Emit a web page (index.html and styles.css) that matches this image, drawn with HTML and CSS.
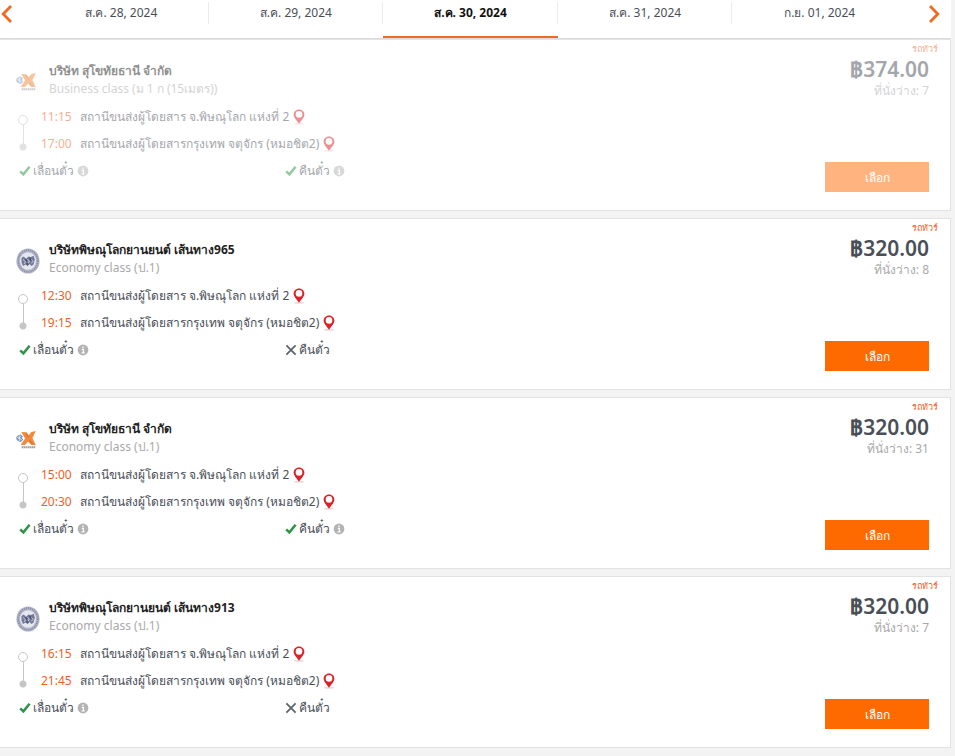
FILE: index.html
```
<!DOCTYPE html>
<html lang="th">
<head>
    <meta charset="UTF-8">
    <meta name="viewport" content="width=device-width, initial-scale=1.0">
    <title>ตารางเดินรถ</title>
    <link rel="stylesheet" href="styles.css">
</head>
<body>
    <!-- shared icons -->
    <svg class="sprite" aria-hidden="true">
        <symbol id="pin" viewBox="0 0 12 16">
            <ellipse cx="6" cy="14.8" rx="5" ry="1" fill="#eadada"/>
            <path d="M6 0.4C2.9 0.4 0.6 2.7 0.6 5.6C0.6 8.6 3.6 11.2 6 14.8C8.4 11.2 11.4 8.6 11.4 5.6C11.4 2.7 9.1 0.4 6 0.4Z" fill="#dc2128"/>
            <circle cx="6" cy="5.4" r="3.3" fill="#fff"/>
        </symbol>
        <symbol id="check" viewBox="0 0 12 12">
            <path d="M1.2 6.4L4.4 9.4L10.6 1.8" fill="none" stroke="#2f9447" stroke-width="2.6"/>
        </symbol>
        <symbol id="cross" viewBox="0 0 12 12">
            <path d="M1.4 1.4L10.6 10.6M10.6 1.4L1.4 10.6" fill="none" stroke="#5c646c" stroke-width="1.8"/>
        </symbol>
        <symbol id="info" viewBox="0 0 12 12">
            <circle cx="6" cy="6" r="5.4" fill="#b3b3b3"/>
            <path d="M6 2.4V4M4.8 5.3H6.4V8.8M4.6 8.9H7.6" fill="none" stroke="#fff" stroke-width="1.3"/>
        </symbol>
        <symbol id="logo-x" viewBox="0 0 19 17">
            <path d="M5 0.8L10 1.2L12 4L14.6 0.8L18.8 0L15.6 6.6L18.8 13.4L14 13L11.6 10L8.6 13.2L4.4 13L8.6 7Z" fill="#f28a3c"/>
            <path d="M9.5 2.6L12 6M12.6 8.8L15.8 12" stroke="#d9682a" stroke-width="1"/>
            <path d="M4.6 3.2C2 3.4 0 5 0.2 6.8C0.4 8.8 2.4 10 4.6 10.4L7 7.8L5.4 6.8L6.6 5.2Z" fill="#7d93b5"/>
            <path d="M0.8 5.6L5.6 8.2M3 3.8L3.6 9.6M5.2 4.4L2 7.6" stroke="#fff" stroke-width="0.6"/>
            <path d="M5.4 15.4H18.6" stroke="#a59a95" stroke-width="1.8" stroke-dasharray="1.5 0.4"/>
        </symbol>
        <symbol id="logo-seal" viewBox="0 0 24 26">
            <ellipse cx="12" cy="13" rx="11.6" ry="12.6" fill="#b3b6c8"/>
            <ellipse cx="12" cy="13" rx="9.8" ry="10.8" fill="none" stroke="#8488a4" stroke-width="1.8" stroke-dasharray="1 1.1"/>
            <ellipse cx="12" cy="13" rx="8" ry="8.8" fill="#e6e8f0"/>
            <path d="M5.4 10.4L7 8.4L9 9.4L10 11L12.4 8.4L15 9L17.6 7.8L18.8 11.6L17.6 16.6L15.6 18L13.4 16L11.6 18.2L9.6 16.6L7 18L5.6 15Z" fill="#747996"/>
            <path d="M7 11.4L9.6 13.8L8 16M11.4 11.4L13.4 13L12.2 15.2M15 11L17 13.4L15.4 15.4" stroke="#dfe2ef" stroke-width="0.8" fill="none"/>
            <path d="M9.4 11L11 13.4M13.6 10.2L15.4 12.6M10.4 15.6L12.4 16.4" stroke="#3d4266" stroke-width="1.1"/>
        </symbol>
    </svg>

    <nav class="date-bar">
        <button type="button" class="arrow arrow-prev" aria-label="ก่อนหน้า">
            <svg width="11" height="20" viewBox="0 0 11 20"><path d="M10 2L2.2 10L10 18" fill="none" stroke="#f26a21" stroke-width="2.8"/></svg>
        </button>
        <div class="dates">
            <a href="#" class="date">ส.ค. 28, 2024</a>
            <a href="#" class="date">ส.ค. 29, 2024</a>
            <a href="#" class="date active">ส.ค. 30, 2024</a>
            <a href="#" class="date">ส.ค. 31, 2024</a>
            <a href="#" class="date">ก.ย. 01, 2024</a>
        </div>
        <button type="button" class="arrow arrow-next" aria-label="ถัดไป">
            <svg width="11" height="20" viewBox="0 0 11 20"><path d="M1 2L8.8 10L1 18" fill="none" stroke="#f26a21" stroke-width="2.8"/></svg>
        </button>
    </nav>

    <main class="trips">
        <article class="trip disabled">
            <div class="trip-main">
                <div class="operator">
                    <svg class="logo"><use href="#logo-x"/></svg>
                    <div>
                        <h2 class="name">บริษัท สุโขทัยธานี จำกัด</h2>
                        <p class="class">Business class (ม 1 ก (15เมตร))</p>
                    </div>
                </div>
                <div class="route">
                    <div class="track"></div>
                    <ul class="stops">
                        <li><span class="time">11:15</span>สถานีขนส่งผู้โดยสาร จ.พิษณุโลก แห่งที่ 2<svg class="pin"><use href="#pin"/></svg></li>
                        <li><span class="time">17:00</span>สถานีขนส่งผู้โดยสารกรุงเทพ จตุจักร (หมอชิต2)<svg class="pin"><use href="#pin"/></svg></li>
                    </ul>
                </div>
                <div class="policy">
                    <span class="rule"><svg class="icon"><use href="#check"/></svg>เลื่อนตั๋ว<svg class="icon info"><use href="#info"/></svg></span>
                    <span class="rule"><svg class="icon"><use href="#check"/></svg>คืนตั๋ว<svg class="icon info"><use href="#info"/></svg></span>
                </div>
            </div>
            <div class="trip-side">
                <span class="type">รถทัวร์</span>
                <strong class="price">฿374.00</strong>
                <span class="seats">ที่นั่งว่าง: 7</span>
                <button type="button" class="select" disabled>เลือก</button>
            </div>
        </article>

        <article class="trip">
            <div class="trip-main">
                <div class="operator">
                    <svg class="logo seal"><use href="#logo-seal"/></svg>
                    <div>
                        <h2 class="name">บริษัทพิษณุโลกยานยนต์ เส้นทาง965</h2>
                        <p class="class">Economy class (ป.1)</p>
                    </div>
                </div>
                <div class="route">
                    <div class="track"></div>
                    <ul class="stops">
                        <li><span class="time">12:30</span>สถานีขนส่งผู้โดยสาร จ.พิษณุโลก แห่งที่ 2<svg class="pin"><use href="#pin"/></svg></li>
                        <li><span class="time">19:15</span>สถานีขนส่งผู้โดยสารกรุงเทพ จตุจักร (หมอชิต2)<svg class="pin"><use href="#pin"/></svg></li>
                    </ul>
                </div>
                <div class="policy">
                    <span class="rule"><svg class="icon"><use href="#check"/></svg>เลื่อนตั๋ว<svg class="icon info"><use href="#info"/></svg></span>
                    <span class="rule"><svg class="icon"><use href="#cross"/></svg>คืนตั๋ว</span>
                </div>
            </div>
            <div class="trip-side">
                <span class="type">รถทัวร์</span>
                <strong class="price">฿320.00</strong>
                <span class="seats">ที่นั่งว่าง: 8</span>
                <button type="button" class="select">เลือก</button>
            </div>
        </article>

        <article class="trip">
            <div class="trip-main">
                <div class="operator">
                    <svg class="logo"><use href="#logo-x"/></svg>
                    <div>
                        <h2 class="name">บริษัท สุโขทัยธานี จำกัด</h2>
                        <p class="class">Economy class (ป.1)</p>
                    </div>
                </div>
                <div class="route">
                    <div class="track"></div>
                    <ul class="stops">
                        <li><span class="time">15:00</span>สถานีขนส่งผู้โดยสาร จ.พิษณุโลก แห่งที่ 2<svg class="pin"><use href="#pin"/></svg></li>
                        <li><span class="time">20:30</span>สถานีขนส่งผู้โดยสารกรุงเทพ จตุจักร (หมอชิต2)<svg class="pin"><use href="#pin"/></svg></li>
                    </ul>
                </div>
                <div class="policy">
                    <span class="rule"><svg class="icon"><use href="#check"/></svg>เลื่อนตั๋ว<svg class="icon info"><use href="#info"/></svg></span>
                    <span class="rule"><svg class="icon"><use href="#check"/></svg>คืนตั๋ว<svg class="icon info"><use href="#info"/></svg></span>
                </div>
            </div>
            <div class="trip-side">
                <span class="type">รถทัวร์</span>
                <strong class="price">฿320.00</strong>
                <span class="seats">ที่นั่งว่าง: 31</span>
                <button type="button" class="select">เลือก</button>
            </div>
        </article>

        <article class="trip">
            <div class="trip-main">
                <div class="operator">
                    <svg class="logo seal"><use href="#logo-seal"/></svg>
                    <div>
                        <h2 class="name">บริษัทพิษณุโลกยานยนต์ เส้นทาง913</h2>
                        <p class="class">Economy class (ป.1)</p>
                    </div>
                </div>
                <div class="route">
                    <div class="track"></div>
                    <ul class="stops">
                        <li><span class="time">16:15</span>สถานีขนส่งผู้โดยสาร จ.พิษณุโลก แห่งที่ 2<svg class="pin"><use href="#pin"/></svg></li>
                        <li><span class="time">21:45</span>สถานีขนส่งผู้โดยสารกรุงเทพ จตุจักร (หมอชิต2)<svg class="pin"><use href="#pin"/></svg></li>
                    </ul>
                </div>
                <div class="policy">
                    <span class="rule"><svg class="icon"><use href="#check"/></svg>เลื่อนตั๋ว<svg class="icon info"><use href="#info"/></svg></span>
                    <span class="rule"><svg class="icon"><use href="#cross"/></svg>คืนตั๋ว</span>
                </div>
            </div>
            <div class="trip-side">
                <span class="type">รถทัวร์</span>
                <strong class="price">฿320.00</strong>
                <span class="seats">ที่นั่งว่าง: 7</span>
                <button type="button" class="select">เลือก</button>
            </div>
        </article>
    </main>
</body>
</html>
```
FILE: styles.css
```
* {
    margin: 0;
    padding: 0;
    box-sizing: border-box;
}

body {
    background-color: #f3f3f3;
    padding-right: 4px;
    font-family: 'Noto Sans', 'Open Sans', sans-serif;
    font-size: 12px;
    color: #4a4f57;
}

button {
    font-family: inherit;
    border: none;
    cursor: pointer;
}

.sprite {
    display: none;
}

/* date bar */
.date-bar {
    display: flex;
    background-color: #fff;
    border-bottom: 1px solid #dcdcdc;
}

.arrow {
    display: flex;
    padding-top: 4px;
    background: none;
}

.arrow-prev {
    width: 34px;
    padding-left: 1px;
}

.arrow-next {
    width: 44px;
    justify-content: flex-end;
    padding-right: 11px;
}

.dates {
    display: flex;
    flex: 1;
}

.date {
    flex: 1;
    height: 38px;
    padding-top: 2px;
    line-height: 22px;
    text-align: center;
    text-decoration: none;
    color: #4a4f57;
    background: linear-gradient(#ececec, #ececec) right 2px / 1px 22px no-repeat;
    border-bottom: 2px solid transparent;
}

.date:last-child {
    background: none;
}

.date.active {
    color: #111;
    font-weight: bold;
    border-bottom-color: #f26a21;
}

/* trip cards */
.trips {
    display: flex;
    flex-direction: column;
    gap: 7px;
}

.trip {
    display: flex;
    background-color: #fff;
    border: 1px solid #e2e2e2;
    border-left: none;
}

.trip-main {
    flex: 1;
    padding: 22px 8px 26px 16px;
}

.operator {
    display: flex;
    align-items: center;
    gap: 9px;
    margin-bottom: 6px;
}

.logo {
    width: 20px;
    height: 18px;
    margin: 4px 4px 0 0;
}

.logo.seal {
    width: 24px;
    height: 26px;
    margin-right: 0;
}

.name {
    font-size: 12px;
    line-height: 18px;
    color: #222;
}

.class {
    line-height: 17px;
    color: #a9a9a9;
}

.route {
    display: flex;
    align-items: center;
    gap: 14px;
    padding-left: 3px;
}

.track {
    display: flex;
    flex-direction: column;
    align-items: center;
    width: 8px;
    margin-top: 6px;
}

.track::before {
    content: '';
    width: 8px;
    height: 8px;
    border: 1px solid #c6c6c6;
    border-radius: 50%;
}

.track::after {
    content: '';
    width: 8px;
    height: 26px;
    background:
        radial-gradient(circle at 4px 22px, #c6c6c6 3px, transparent 4px),
        linear-gradient(#c6c6c6, #c6c6c6) center top / 1px 20px no-repeat;
}

.stops {
    list-style: none;
}

.stops li {
    display: flex;
    align-items: center;
    line-height: 27px;
    white-space: nowrap;
}

.time {
    width: 39px;
    color: #f2601f;
}

.pin {
    width: 12px;
    height: 16px;
    margin-left: 4px;
}

.policy {
    display: grid;
    grid-template-columns: repeat(3, 1fr);
    padding-left: 3px;
}

.rule {
    display: flex;
    align-items: center;
    gap: 2px;
    line-height: 27px;
}

.icon {
    width: 12px;
    height: 12px;
}

.icon.info {
    margin-left: 1px;
}

.trip-side {
    display: flex;
    flex-direction: column;
    align-items: flex-end;
    padding: 2px 21px 18px 0;
}

.type {
    margin-right: -9px;
    font-size: 9px;
    line-height: 14px;
    color: #f2601f;
}

.price {
    font-size: 21px;
    line-height: 26px;
    font-weight: 600;
}

.seats {
    line-height: 18px;
    color: #a9a9a9;
}

.select {
    width: 104px;
    height: 30px;
    margin-top: auto;
    font-size: 12px;
    color: #fff;
    background-color: #ff6a00;
}

.trip.disabled .trip-main,
.trip.disabled .trip-side {
    opacity: 0.5;
}
```
